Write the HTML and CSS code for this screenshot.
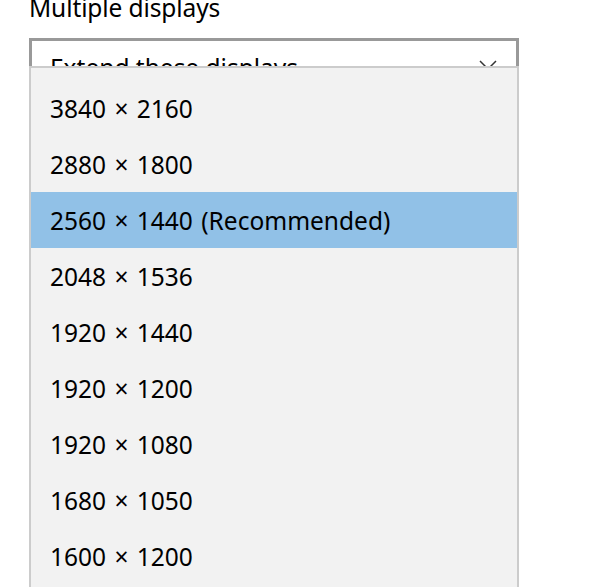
FILE: index.html
```html
<!DOCTYPE html>
<html lang="en">
<head>
<meta charset="utf-8">
<title>Multiple displays</title>
<link rel="stylesheet" href="styles.css">
</head>
<body>
<div class="page">
  <div class="label">Multiple displays</div>
  <div class="field">
    <div class="combo">
      <span class="combo-text">Extend these displays</span>
      <svg class="chevron" width="18" height="10" viewBox="0 0 18 10" aria-hidden="true">
        <path d="M1 1 L9 9 L17 1" fill="none" stroke="#333" stroke-width="1.5"/>
      </svg>
    </div>
    <ul class="popup">
      <li class="item">3840 × 2160</li>
      <li class="item">2880 × 1800</li>
      <li class="item selected">2560 × 1440 (Recommended)</li>
      <li class="item">2048 × 1536</li>
      <li class="item">1920 × 1440</li>
      <li class="item">1920 × 1200</li>
      <li class="item">1920 × 1080</li>
      <li class="item">1680 × 1050</li>
      <li class="item">1600 × 1200</li>
    </ul>
  </div>
</div>
</body>
</html>
```

FILE: styles.css
```css
body {
  margin: 0;
  padding: 0;
  background: #ffffff;
  height: 587px;
  overflow: hidden;
}

.page {
  padding-left: 29px;
  font-family: "Noto Sans", "Open Sans", sans-serif;
  color: #000000;
}

.label {
  font-size: 24.5px;
  line-height: 36px;
  height: 36px;
  margin-top: -10px;
  margin-bottom: 12px;
  letter-spacing: -0.1px;
}

.field {
  display: flex;
  flex-direction: column;
  width: 490px;
}

.combo {
  box-sizing: border-box;
  height: 58px;
  border: 3px solid #999999;
  background: #ffffff;
  display: flex;
  align-items: center;
  justify-content: space-between;
  padding: 0 19px 0 18px;
  font-size: 24.5px;
}

.chevron {
  display: block;
  margin-top: -4px;
}

.popup {
  position: relative;
  z-index: 1;
  margin: -30px 0 0 0;
  box-sizing: border-box;
  width: 490px;
  padding: 12px 0 16px 0;
  list-style: none;
  background: #f2f2f2;
  border: 2px solid #cccccc;
  border-bottom: none;
}

.item {
  height: 56px;
  display: flex;
  align-items: center;
  padding-left: 19px;
  font-size: 24.5px;
  word-spacing: 2px;
  white-space: nowrap;
}

.item.selected {
  background: #91c1e7;
}
```
